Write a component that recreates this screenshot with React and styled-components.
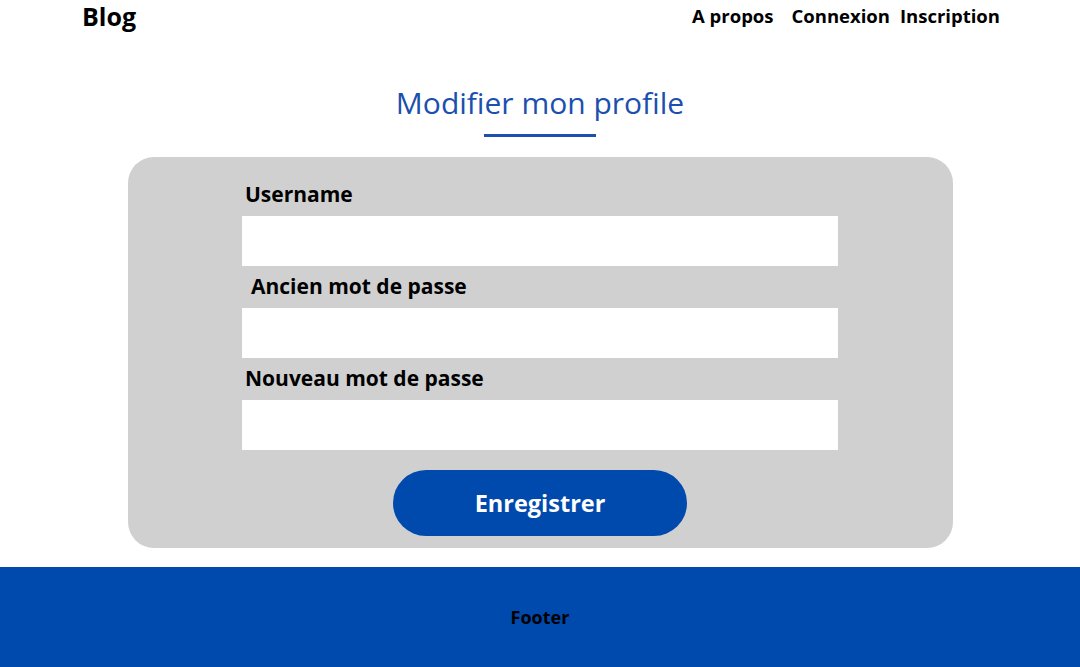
import React from 'react'
import styled, { createGlobalStyle } from 'styled-components'

const GlobalStyle = createGlobalStyle`
  body {
    margin: 0;
    font-family: "Open Sans", "DejaVu Sans", sans-serif;
    background: #ffffff;
    color: #000000;
  }
`

const fields = [
  { label: 'Username', indent: 3, type: 'text' },
  { label: 'Ancien mot de passe', indent: 9, type: 'password' },
  { label: 'Nouveau mot de passe', indent: 3, type: 'password' },
]

const App = () => {
  return (
    <>
      <GlobalStyle />
      <Page>
        <Header>
          <Logo href='#'>Blog</Logo>
          <Nav>
            <NavLink href='#' $space={18}>A propos</NavLink>
            <NavLink href='#' $space={10}>Connexion</NavLink>
            <NavLink href='#'>Inscription</NavLink>
          </Nav>
        </Header>

        <Main>
          <Title>Modifier mon profile</Title>
          <Underline />

          <Card onSubmit={(e) => e.preventDefault()}>
            <Fields>
              {fields.map((f) => (
                <Field key={f.label}>
                  <Label $indent={f.indent}>{f.label}</Label>
                  <Input type={f.type} />
                </Field>
              ))}
            </Fields>
            <SaveButton type='submit'>Enregistrer</SaveButton>
          </Card>
        </Main>

        <Footer>Footer</Footer>
      </Page>
    </>
  )
}

export default App


const Page = styled.div`
  display: flex;
  flex-direction: column;
  min-height: 667px;
`

const Header = styled.header`
  display: flex;
  justify-content: space-between;
  align-items: center;
  height: 32px;
  padding: 0 80px 0 82px;
`

const Logo = styled.a`
  text-decoration: none;
  color: #000;
  font-weight: 700;
  font-size: 25px;
  line-height: 32px;
`

const Nav = styled.nav`
  display: flex;
  align-items: center;
`

const NavLink = styled.a`
  text-decoration: none;
  color: #000;
  font-weight: 700;
  font-size: 18.5px;
  line-height: 32px;
  margin-right: ${(p) => p.$space || 0}px;
`

const Main = styled.main`
  display: flex;
  flex-direction: column;
  align-items: center;
  padding-top: 50px;
  padding-bottom: 19px;
`

const Title = styled.h1`
  margin: 0;
  font-size: 30px;
  font-weight: 400;
  line-height: 41px;
  color: #1c4fae;
`

const Underline = styled.div`
  width: 112px;
  height: 3px;
  background: #1c4fae;
  margin-top: 11px;
  margin-bottom: 20px;
`

const Card = styled.form`
  width: 825px;
  box-sizing: border-box;
  background: #d0d0d0;
  border-radius: 26px;
  padding: 24px 0 12px;
  display: flex;
  flex-direction: column;
  align-items: center;
`

const Fields = styled.div`
  width: 596px;
  display: flex;
  flex-direction: column;
  gap: 7px;
`

const Field = styled.div`
  display: flex;
  flex-direction: column;
`

const Label = styled.label`
  font-weight: 700;
  font-size: 21px;
  line-height: 27px;
  padding-left: ${(p) => p.$indent}px;
  margin-bottom: 8px;
`

const Input = styled.input`
  height: 50px;
  border: none;
  outline: none;
  background: #ffffff;
  padding: 0 12px;
  font-family: inherit;
  font-size: 18px;
`

const SaveButton = styled.button`
  margin-top: 20px;
  width: 294px;
  height: 66px;
  border: none;
  border-radius: 33px;
  background: #004aad;
  color: #ffffff;
  font-family: inherit;
  font-weight: 700;
  font-size: 23.5px;
  cursor: pointer;
`

const Footer = styled.footer`
  height: 100px;
  background: #004aad;
  display: flex;
  justify-content: center;
  align-items: center;
  font-weight: 700;
  font-size: 18px;
  color: #000;
`
